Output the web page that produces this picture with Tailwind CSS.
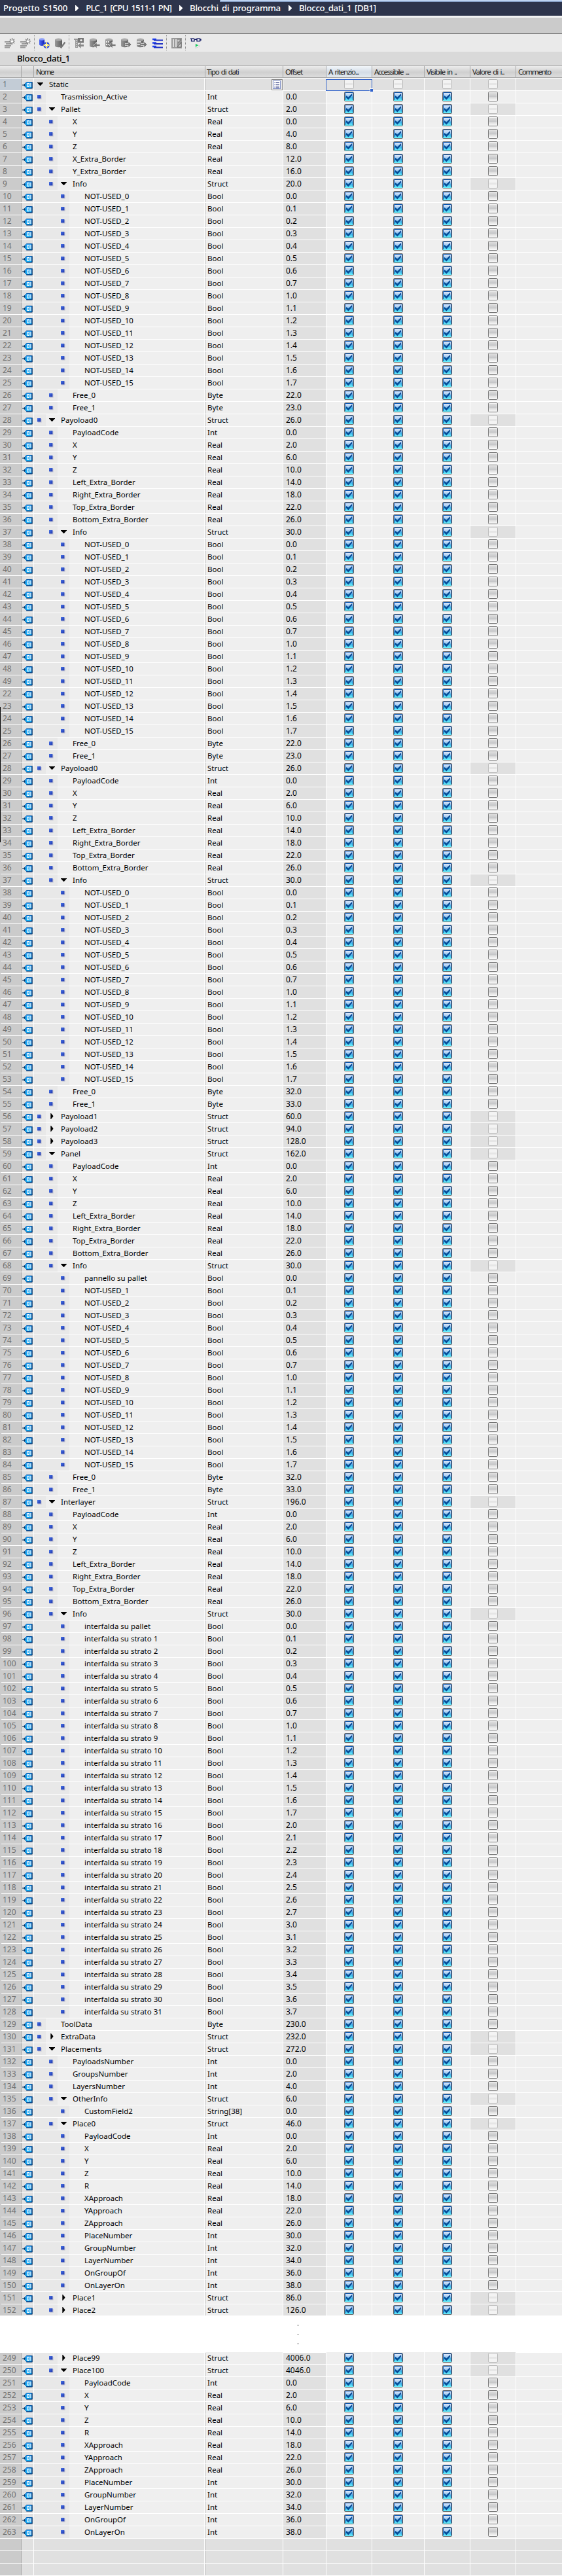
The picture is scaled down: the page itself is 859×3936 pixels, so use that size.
<!DOCTYPE html>
<html lang="it">
<head>
<meta charset="utf-8">
<title>Blocco_dati_1 [DB1]</title>
<script src="https://cdn.jsdelivr.net/npm/@tailwindcss/browser@4"></script>
</head>
<body class="relative w-[859px] h-[3936px] overflow-hidden bg-white font-['Noto_Sans','Open_Sans',sans-serif] text-[11.5px] text-black">
<svg width="0" height="0" class="absolute">
  <defs>
    <linearGradient id="gOn" x1="0" y1="0" x2="0" y2="1"><stop offset="0" stop-color="#f2f4ff"/><stop offset=".4" stop-color="#a8ccf2"/><stop offset=".6" stop-color="#3fb4e8"/><stop offset="1" stop-color="#6dfbff"/></linearGradient>
    <linearGradient id="gOff" x1="0" y1="0" x2="0" y2="1"><stop offset="0" stop-color="#f8f8f8"/><stop offset=".12" stop-color="#dcdcdc"/><stop offset=".5" stop-color="#c6c7c9"/><stop offset=".62" stop-color="#dedede"/><stop offset="1" stop-color="#fdfdfd"/></linearGradient>
    <linearGradient id="gTag" x1="0" y1="0" x2="0" y2="1"><stop offset="0" stop-color="#2f9df0"/><stop offset="1" stop-color="#0cb0f6"/></linearGradient>
    <linearGradient id="gDot" x1="0" y1="0" x2="1" y2="1"><stop offset="0" stop-color="#4a74e6"/><stop offset="1" stop-color="#1b33ad"/></linearGradient>
    <linearGradient id="gDb" x1="0" y1="0" x2="1" y2="0"><stop offset="0" stop-color="#9a9a9a"/><stop offset="1" stop-color="#5c5c5c"/></linearGradient>
    <linearGradient id="gDbB" x1="0" y1="0" x2="1" y2="0"><stop offset="0" stop-color="#4f6cf5"/><stop offset="1" stop-color="#1220b8"/></linearGradient>
    <symbol id="on" viewBox="0 0 15 15"><rect x=".5" y=".5" width="14" height="14" rx="1.2" fill="url(#gOn)" stroke="#6a6a6a"/><path d="M1.5 13V1.5H13.5V13" fill="none" stroke="#0a55b0"/><path d="M3 6 L6.4 8.4 L12 3 V6 L6.4 12.4 L3 9Z" fill="#064a96"/></symbol>
    <symbol id="off" viewBox="0 0 15 15"><rect x=".5" y=".5" width="14" height="14" rx="1.6" fill="url(#gOff)" stroke="#747474"/><rect x="1.5" y="1.5" width="12" height="12" fill="none" stroke="#fff" stroke-opacity=".5"/></symbol>
    <symbol id="dis" viewBox="0 0 15 15"><rect x=".5" y=".5" width="14" height="14" rx="1.6" fill="#f3f3f3" stroke="#b9b9b9"/><rect x="2" y="6" width="11" height="3" fill="#e6e6e6"/></symbol>
    <symbol id="tag" viewBox="0 0 17 11"><path d="M4 4 7 1H16.6V10.6H7Z" fill="#9aa0a8"/><path d="M2.5 5 6.5.5H14.5V9.5H6.5Z" fill="url(#gTag)" stroke="#0758a8"/><path d="M15.1 0V10H6.2" fill="none" stroke="#06407e" stroke-width="1"/><path d="M0 5H5M3.4 3.4V6.6" stroke="#06335f" stroke-width="1.2"/><path d="M8 2.6H10.4V7.4H8ZM13 2V8" fill="none" stroke="#fff" stroke-width="1.2"/></symbol>
    <symbol id="dot" viewBox="0 0 7 7"><rect x="1" y="1" width="5.6" height="5.6" fill="#c4c6d2"/><rect width="5.4" height="5.4" fill="url(#gDot)"/></symbol>
    <symbol id="down" viewBox="0 0 9 9"><path d="M0 2H9V2.6L4.8 7H4.2L0 2.6Z"/></symbol>
    <symbol id="right" viewBox="0 0 9 9"><path d="M2.3 0H3L6.3 4V5L3 9H2.3Z"/></symbol>
    <symbol id="crumb" viewBox="0 0 5 9"><path d="M0 0H.8L5 4V5L.8 9H0Z" fill="#fff"/></symbol>
    <symbol id="addrow" viewBox="0 0 16 16"><path d="M0 6H8M2 9H12M0 12H10M0 14.5H8" stroke="#9a9a9a" stroke-width="1.8"/><path d="M11.5 0V10M6.8 5H16.3M8 1.6 15 8.4M15 1.6 8 8.4" stroke="#777" stroke-width="1.2"/><circle cx="11.5" cy="5" r="1.8" fill="#fff"/></symbol>
    <symbol id="db" viewBox="0 0 16 16"><path d="M0 2.5V12C0 15 11 15 11 12V2.5Z" fill="url(#gDb)"/><ellipse cx="5.5" cy="2.6" rx="5.5" ry="2" fill="#ababab"/></symbol>
    <symbol id="left-arrow" viewBox="0 0 10 10"><path d="M0 5 5 0V3.4H10V6.6H5V10Z" fill="#777" stroke="#e8e8e8" stroke-width=".8"/></symbol>
    <symbol id="right-arrow" viewBox="0 0 10 10"><path d="M10 5 5 0V3.4H0V6.6H5V10Z" fill="#777" stroke="#e8e8e8" stroke-width=".8"/></symbol>
  </defs>
</svg>

<header class="relative flex h-6 items-center bg-[#2d344b] pl-[5px] pt-px text-[13.3px] font-medium text-white">
  <span data-w="99" class="whitespace-nowrap [word-spacing:1.5px]">Progetto S1500</span>
  <svg class="ml-[12px] mr-[11px] h-[9px] w-[5px] shrink-0"><use href="#crumb"/></svg>
  <span data-w="146" class="whitespace-nowrap [word-spacing:2px]">PLC_1 [CPU 1511-1 PN]</span>
  <svg class="ml-[12px] mr-[11px] h-[9px] w-[5px] shrink-0"><use href="#crumb"/></svg>
  <span data-w="139" class="whitespace-nowrap [word-spacing:2px]">Blocchi di programma</span>
  <svg class="ml-[12px] mr-[11px] h-[9px] w-[5px] shrink-0"><use href="#crumb"/></svg>
  <span data-w="131" class="whitespace-nowrap [word-spacing:1.5px]">Blocco_dati_1 [DB1]</span>
  <div class="absolute left-[336px] right-0 top-0 h-[3px] border-b border-l border-[#7d97bf] bg-[#bdd3f1]"></div>
</header>
<div class="h-[3px] bg-[#f2f2f2]"></div>
<div class="h-[25px] border-b border-[#6c6c6c] bg-[#cbcbcb]"></div>

<div class="flex h-[27px] items-center bg-[#eaeaea] pl-[7px]">
  <svg class="h-4 w-4"><use href="#addrow"/></svg>
  <svg class="ml-2 h-4 w-4"><use href="#addrow"/></svg>
  <div class="ml-[5px] h-[23px] border-l border-dotted border-[#888]"></div>
  <svg class="ml-[7px] h-4 w-4" viewBox="0 0 16 16"><path d="M0 2V10C0 12.5 8 12.5 8 10V2Z" fill="url(#gDbB)"/><ellipse cx="4" cy="2" rx="4" ry="1.7" fill="#8c9df8"/><circle cx="11" cy="11" r="4.8" fill="#3550d8"/><path d="M11 6.5V15.5M6.5 11H15.5" stroke="#ffe95a" stroke-width="2"/><path d="M9 9 13 13M13 9 9 13" stroke="#fff" stroke-width="1"/></svg>
  <svg class="ml-2 h-4 w-4" viewBox="0 0 16 16"><path d="M0 2.5V12C0 15 11 15 11 12V2.5Z" fill="url(#gDb)"/><ellipse cx="5.5" cy="2.6" rx="5.5" ry="2" fill="#ababab"/><path d="M6.5 11 9.5 14.5 15.5 6.5" fill="none" stroke="#777" stroke-width="2.4"/></svg>
  <div class="ml-[5px] h-[23px] border-l border-dotted border-[#888]"></div>
  <svg class="ml-[7px] h-4 w-4" viewBox="0 0 16 16"><path d="M0 1H6V15H2V3H0Z" fill="#999"/><path d="M3 4H5M3 7H5M3 10H5M3 13H5" stroke="#eee"/><rect x="6" y="0" width="9" height="7.5" fill="#777"/><circle cx="11" cy="3.6" r="1.7" fill="#eee"/><path d="M6 11.5 10.5 7V10H15V13H10.5V16Z" fill="#888"/></svg>
  <svg class="ml-2 h-4 w-4" viewBox="0 0 16 16"><use href="#db" width="16" height="16"/><use href="#left-arrow" x="6" y="6" width="10" height="10"/></svg>
  <svg class="ml-2 h-4 w-4" viewBox="0 0 16 16"><use href="#db" width="16" height="16"/><path d="M1 6H6M1 10H5" stroke="#eee" stroke-width="2" stroke-dasharray="2 1"/><use href="#left-arrow" x="6" y="6" width="10" height="10"/></svg>
  <svg class="ml-2 h-4 w-4" viewBox="0 0 16 16"><use href="#db" width="16" height="16"/><use href="#right-arrow" x="6" y="5" width="10" height="10"/></svg>
  <svg class="ml-2 h-4 w-4" viewBox="0 0 16 16"><use href="#db" width="16" height="16"/><path d="M1 6H6M1 10H5" stroke="#eee" stroke-width="2" stroke-dasharray="2 1"/><use href="#right-arrow" x="6" y="5" width="10" height="10"/></svg>
  <svg class="ml-2 h-4 w-4" viewBox="0 0 16 16"><path d="M0 2H6M0 7.5H6M0 13H6" stroke="#1b3df0" stroke-width="2.4"/><path d="M2 3.5H16M2 9H16M2 14.5H16" stroke="#1d2fc4" stroke-width="1.8"/></svg>
  <div class="ml-[5px] h-[23px] border-l border-dotted border-[#888]"></div>
  <svg class="ml-[7px] h-4 w-4" viewBox="0 0 16 16"><rect width="16" height="16" fill="#999"/><path d="M2 2H4V14H2ZM6 2H8V14H6Z" fill="#ddd"/><path d="M9 2H15L10 7M15 6V14H9L15 7" fill="#ccc" stroke="#666"/></svg>
  <div class="ml-[5px] h-[23px] border-l border-dotted border-[#888]"></div>
  <svg class="ml-[7px] h-4 w-4 overflow-visible" viewBox="0 0 16 16"><path d="M0 1.2H6M1.6 1.2V4.9H6V1.2M10 4.9V1.2H14.6V4.9ZM6 2.2H10M14.6 2.2H16V4" fill="#fff" stroke="#141c66" stroke-width="1.4"/><path d="M8 9 14.5 12.3 8 15.6Z" fill="#fff" stroke="#bbb" stroke-width=".7"/><path d="M8 9 12 11.2 8 14Z" fill="#14d05c"/></svg>
</div>

<div class="h-[21px] bg-[#d9d9d9] pl-[26px] text-[13.3px] font-medium leading-[20px]"><span data-w="89" class="whitespace-nowrap">Blocco_dati_1</span></div>

<div class="grid h-5 grid-cols-[33px_19px_262px_119px_66px_70px_80px_70px_70px_70px] border-b border-b-white border-t border-t-[#adadad] text-[#1c1c1c] leading-[18px] [word-spacing:1.5px] *:border-r *:border-r-[#a6a6a6] *:border-b *:border-b-[#a8a8a8] *:bg-linear-to-b *:from-[#ececec] *:via-[#cfcfcf] *:via-55% *:to-[#dddddd] *:overflow-hidden *:whitespace-nowrap">
  <div></div><div></div>
  <div class="pl-[3px]"><span data-w="32.5">Nome</span></div>
  <div class="pl-[2px]"><span data-w="59.5">Tipo di dati</span></div>
  <div class="pl-[3px]"><span data-w="32.5">Offset</span></div>
  <div class="pl-[3px] from-[#f2f6fa]! via-[#d3dce6]! to-[#e2eaf0]!"><span data-w="60">A ritenzio...</span></div>
  <div class="pl-[3px]"><span data-w="70.5">Accessibile ...</span></div>
  <div class="pl-[3px]"><span data-w="61">Visibile in ..</span></div>
  <div class="pl-[3px]"><span data-w="61">Valore di i..</span></div>
  <div class="pl-[3px] border-r-0!"><span data-w="60.5">Commento</span></div>
</div>

<main id="table"></main>

<!-- seam along the left edge of the stitched row numbers -->
<div class="absolute left-0 top-[1080px] h-[207px] w-px bg-black"></div>
<div class="absolute left-0 top-[1287px] h-[703px] w-px bg-[#cbcbcb]"></div>
<div class="absolute left-0 top-[1990px] h-[1536px] w-[2px] bg-[#cbcbcb]"></div>

<script>
const names = n => Array.from({length: n}, (_, i) => i);
const bit = i => Math.floor(i / 8) + '.' + (i % 8);
const bools = (first) => names(16).map(i => [3, '', i === 0 && first ? first : 'NOT-USED_' + i, 'Bool', bit(i)]);
const coords = (l) => [[l,'','PayloadCode','Int','0.0'],[l,'','X','Real','2.0'],[l,'','Y','Real','6.0'],[l,'','Z','Real','10.0']];
const borders = [[2,'','Left_Extra_Border','Real','14.0'],[2,'','Right_Extra_Border','Real','18.0'],[2,'','Top_Extra_Border','Real','22.0'],[2,'','Bottom_Extra_Border','Real','26.0'],[2,'down','Info','Struct','30.0']];
const free = (a, b) => [[2,'','Free_0','Byte',a],[2,'','Free_1','Byte',b]];
const place = [...coords(3),[3,'','R','Real','14.0'],[3,'','XApproach','Real','18.0'],[3,'','YApproach','Real','22.0'],[3,'','ZApproach','Real','26.0'],[3,'','PlaceNumber','Int','30.0'],[3,'','GroupNumber','Int','32.0'],[3,'','LayerNumber','Int','34.0'],[3,'','OnGroupOf','Int','36.0'],[3,'','OnLayerOn','Int','38.0']];

const top1 = [
  [0,'down','Static','',''],
  [1,'','Trasmission_Active','Int','0.0'],
  [1,'down','Pallet','Struct','2.0'],
  [2,'','X','Real','0.0'],[2,'','Y','Real','4.0'],[2,'','Z','Real','8.0'],
  [2,'','X_Extra_Border','Real','12.0'],[2,'','Y_Extra_Border','Real','16.0'],
  [2,'down','Info','Struct','20.0'], ...bools(), ...free('22.0','23.0'),
  [1,'down','Payoload0','Struct','26.0'], ...coords(2), ...borders, ...bools(), ...free('22.0','23.0'),
  [1,'down','Payoload0','Struct','26.0'], ...coords(2), ...borders, ...bools(), ...free('32.0','33.0'),
  [1,'right','Payoload1','Struct','60.0'],[1,'right','Payoload2','Struct','94.0'],[1,'right','Payoload3','Struct','128.0'],
  [1,'down','Panel','Struct','162.0'], ...coords(2), ...borders, ...bools('pannello su pallet'), ...free('32.0','33.0'),
  [1,'down','Interlayer','Struct','196.0'], ...coords(2), ...borders,
  ...names(32).map(i => [3,'', i ? 'interfalda su strato ' + i : 'interfalda su pallet','Bool',bit(i)]),
  [1,'','ToolData','Byte','230.0'],[1,'right','ExtraData','Struct','232.0'],[1,'down','Placements','Struct','272.0'],
  [2,'','PayloadsNumber','Int','0.0'],[2,'','GroupsNumber','Int','2.0'],[2,'','LayersNumber','Int','4.0'],
  [2,'down','OtherInfo','Struct','6.0'],[3,'','CustomField2','String[38]','0.0'],
  [2,'down','Place0','Struct','46.0'], ...place,
  [2,'right','Place1','Struct','86.0'],[2,'right','Place2','Struct','126.0'],
];
const bottom = [[2,'right','Place99','Struct','4006.0'],[2,'down','Place100','Struct','4046.0'], ...place];

const grid = 'grid h-[19px] grid-cols-[33px_19px_262px_119px_66px_70px_80px_70px_70px_70px] border-b border-white leading-[18px] whitespace-nowrap';
const box = k => `<svg class="h-[15px] w-[15px]"><use href="#${k}"/></svg>`;
const cell = (k, bg, extra = '') => `<div class="relative flex justify-center border-r border-white pt-px ${bg}">${box(k)}${extra}</div>`;
const indent = ['w-0', 'w-[18px]', 'w-[36px]', 'w-[54px]'];
const focus = '<div class="absolute -left-px top-px h-[18px] w-[71px] border border-[#2f62cc]"></div><div class="absolute -right-[2px] top-[15px] z-10 h-[5px] w-[5px] border-l border-t border-white bg-[#2f62cc]"></div>';
const picker = '<div class="absolute right-0 top-px h-[17px] w-[17px] border border-[#8a8a8a] bg-[#e8e8e8]"><svg class="block h-[15px] w-[15px]" viewBox="0 0 15 15"><rect x="1.5" y="1.5" width="11" height="12" fill="#fff" stroke="#8090c8"/><path d="M3.5 4.5H5M3.5 7H5M3.5 9.5H5M3.5 12H5M6 4.5H11M6 7H11M6 9.5H11M6 12H11" stroke="#1c2a78"/></svg></div>';

function row(num, [lv, tri, name, type, off]) {
  const root = lv === 0;
  const bg = root ? 'bg-[#e0e0e0]' : 'bg-[#efefef]';
  const k = root ? 'dis' : 'on';
  const last = tri ? 'dis' : 'off';
  return `<div class="${grid}">
    <div class="border-r border-[#a9a9a9] pl-1 text-[12px] text-[#717171] ${root ? 'bg-[#c3ccd6]' : 'bg-[#cbcbcb]'}">${num}</div>
    <div class="border-r border-white bg-[#e0e0e0] pl-px pt-[5px]"><svg class="h-[11px] w-[17px]"><use href="#tag"/></svg></div>
    <div class="flex border-r border-[#bdbdbd] ${bg} shadow-[inset_-1px_0_0_#fff]">
      <div class="${indent[lv]} flex shrink-0 justify-end bg-[#e8e8e8] pt-[6px]">${lv ? '<svg class="mr-[6px] h-[7px] w-[7px] shrink-0"><use href="#dot"/></svg>' : ''}</div>
      <div class="w-[23px] shrink-0 pl-[5px] pt-1">${tri ? `<svg class="h-[9px] w-[9px]"><use href="#${tri}"/></svg>` : ''}</div>
      <span>${name}</span>
    </div>
    <div class="relative border-r border-white pl-[3px] ${bg}">${type}${root ? picker : ''}</div>
    <div class="border-r border-white bg-[#e0e0e0] pl-1 text-[12px]">${off}</div>
    ${cell(k, bg, root ? focus : '')}${cell(k, bg)}${cell(k, bg)}${cell(last, tri ? 'bg-[#e0e0e0]' : bg)}
    <div class="${bg}"></div>
  </div>`;
}
const empty = `<div class="${grid}"><div class="border-r border-[#a9a9a9] bg-[#cbcbcb]"></div><div class="border-r border-white bg-[#e0e0e0]"></div><div class="border-r border-[#bdbdbd] bg-[#e0e0e0] shadow-[inset_-1px_0_0_#fff]"></div>${'<div class="border-r border-white bg-[#e0e0e0]"></div>'.repeat(6)}<div class="bg-[#e0e0e0]"></div></div>`;

const numbers = [...names(49).map(i => i + 1), ...names(131).map(i => i + 22)];
const gap = '<div class="relative -mt-[2px] -mb-px flex h-[57px] flex-col items-start gap-[12px] bg-white pl-[455px] pt-[14px]">' + '<b class="block h-[2px] w-px bg-[#333]"></b>'.repeat(3) + '</div>';
document.getElementById('table').innerHTML =
  top1.map((r, i) => row(numbers[i], r)).join('') + gap +
  bottom.map((r, i) => row(249 + i, r)).join('') + empty.repeat(3);

// Spread labels over the width given in data-w.
document.querySelectorAll('[data-w]').forEach(e => {
  const s = (e.dataset.w - e.getBoundingClientRect().width) / e.textContent.length;
  e.style.letterSpacing = s.toFixed(3) + 'px';
});
</script>
</body>
</html>
